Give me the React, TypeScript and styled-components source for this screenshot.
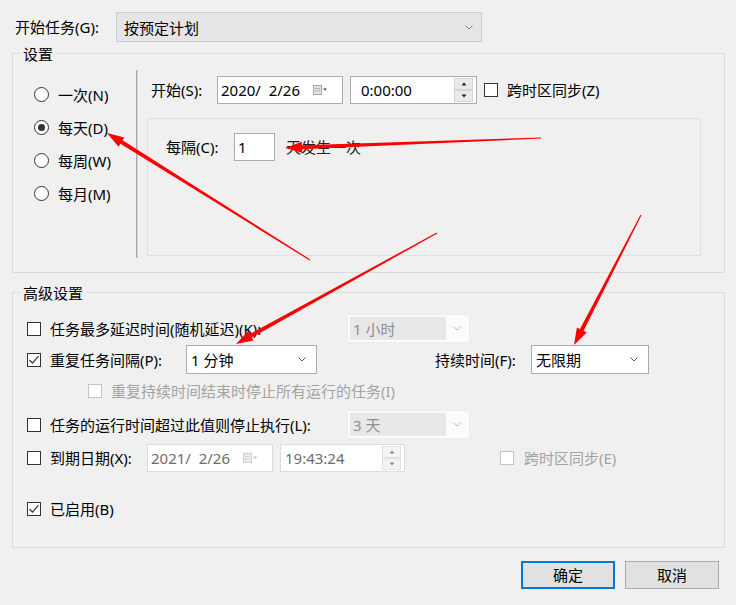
import React from "react";
import styled, { createGlobalStyle } from "styled-components";

const Global = createGlobalStyle`
  html, body { margin: 0; padding: 0; background: #f0f0f0; }
  body {
    font-family: "Noto Sans", "Noto Sans CJK SC", sans-serif;
    font-size: 15px;
    color: #000;
  }
  * { box-sizing: border-box; }
`;

const Page = styled.div`
  position: relative;
  width: 736px;
  height: 605px;
  padding: 12px 11px 0 12px;
  overflow: hidden;
`;

const TopRow = styled.div`
  display: flex;
  align-items: center;
  height: 30px;
  padding-left: 3px;
`;

const Text = styled.span<{ $w?: number; $ml?: number; $disabled?: boolean; $color?: string }>`
  flex-shrink: 0;
  white-space: pre;
  line-height: 20px;
  ${(p) => (p.$w ? `width: ${p.$w}px;` : "")}
  margin-left: ${(p) => p.$ml ?? 0}px;
  color: ${(p) => (p.$disabled ? "#a3a3a3" : p.$color ?? "#000")};
`;

const ReadonlyCombo = styled.div`
  width: 366px;
  height: 30px;
  background: #e5e5e5;
  border: 1px solid #cccccc;
  display: flex;
  align-items: center;
  justify-content: space-between;
  padding: 0 8px 0 7px;
`;

const Group = styled.fieldset<{ $mt: number }>`
  margin: ${(p) => p.$mt}px 0 0 0;
  padding: 0;
  border: 1px solid #dcdcdc;
  min-width: 0;
`;

const Legend = styled.legend`
  margin-left: 7px;
  padding: 2px 3px 0;
  line-height: 22px;
`;

const SettingsBody = styled.div`
  display: flex;
  align-items: flex-start;
  height: 207px;
`;

const RadioCol = styled.div`
  flex-shrink: 0;
  width: 123px;
  padding: 13px 0 0 21px;
  display: flex;
  flex-direction: column;
`;

const RadioRow = styled.label`
  display: flex;
  align-items: center;
  height: 33px;
`;

const RadioCircle = styled.span<{ $on?: boolean }>`
  width: 15px;
  height: 15px;
  border-radius: 50%;
  border: 1px solid #333;
  background: #fff;
  display: flex;
  align-items: center;
  justify-content: center;
  flex-shrink: 0;
  margin-right: 9px;
  &::after {
    content: "";
    width: 7px;
    height: 7px;
    border-radius: 50%;
    background: ${(p) => (p.$on ? "#333" : "transparent")};
  }
`;

const VSep = styled.div`
  flex-shrink: 0;
  margin-top: 5px;
  width: 2px;
  height: 188px;
  border-left: 1px solid #a8a8a8;
  border-right: 1px solid #d6d6d6;
`;

const RightCol = styled.div`
  margin-left: 9px;
  padding-top: 11px;
  display: flex;
  flex-direction: column;
`;

const StartRow = styled.div`
  display: flex;
  align-items: center;
  height: 28px;
  padding-left: 4px;
`;

const Field = styled.div<{ $w: number; $h?: number; $ml?: number; $pl?: number; $disabled?: boolean }>`
  flex-shrink: 0;
  width: ${(p) => p.$w}px;
  height: ${(p) => p.$h ?? 28}px;
  margin-left: ${(p) => p.$ml ?? 0}px;
  padding-left: ${(p) => p.$pl ?? 3}px;
  background: #fff;
  border: 1px solid ${(p) => (p.$disabled ? "#dcdcdc" : "#ababab")};
  color: ${(p) => (p.$disabled ? "#6d6d6d" : "#000")};
  display: flex;
  align-items: center;
  white-space: pre;
  line-height: 20px;
`;

const FieldText = styled.span`
  flex: 1;
`;

const Spinner = styled.div`
  display: flex;
  flex-direction: column;
  margin-right: 3px;
`;

const SpinBtn = styled.div<{ $disabled?: boolean }>`
  width: 19px;
  height: 12px;
  background: ${(p) => (p.$disabled ? "#f4f4f4" : "#eaeaea")};
  border: 1px solid ${(p) => (p.$disabled ? "#e2e2e2" : "#d4d4d4")};
  display: flex;
  align-items: center;
  justify-content: center;
`;

const CalIcon = styled.svg`
  margin-right: 14px;
  flex-shrink: 0;
`;

const InnerPanel = styled.div`
  margin-top: 14px;
  width: 554px;
  height: 138px;
  border: 1px solid #dfdfdf;
  padding: 14px 0 0 18px;
`;

const PanelRow = styled.div`
  display: flex;
  align-items: center;
  height: 28px;
`;

const AdvBody = styled.div`
  height: 243px;
  padding-left: 14px;
  display: flex;
  flex-direction: column;
`;

const Row = styled.div<{ $h: number; $mt: number }>`
  display: flex;
  align-items: center;
  height: ${(p) => p.$h}px;
  margin-top: ${(p) => p.$mt}px;
`;

const Box = styled.span<{ $disabled?: boolean; $ml?: number }>`
  flex-shrink: 0;
  width: 14px;
  height: 14px;
  margin-left: ${(p) => p.$ml ?? 0}px;
  border: 1px solid ${(p) => (p.$disabled ? "#c4c4c4" : "#333")};
  background: #fff;
  display: flex;
  align-items: center;
  justify-content: center;
`;

const Combo = styled.div<{ $w: number }>`
  flex-shrink: 0;
  width: ${(p) => p.$w}px;
  height: 29px;
  background: #fff;
  border: 1px solid #acacac;
  display: flex;
  align-items: center;
  justify-content: space-between;
  padding: 0 10px 0 4px;
  line-height: 20px;
`;

const DisabledCombo = styled.div<{ $w: number }>`
  flex-shrink: 0;
  width: ${(p) => p.$w}px;
  height: 29px;
  background: #fbfbfb;
  border: 1px solid #ececec;
  padding: 2px;
  display: flex;
  align-items: stretch;
`;

const DisabledFill = styled.div`
  width: 96px;
  background: #e8e8e8;
  color: #8f8f8f;
  display: flex;
  align-items: center;
  padding-left: 3px;
  line-height: 20px;
`;

const DisabledArrow = styled.div`
  flex: 1;
  display: flex;
  align-items: center;
  justify-content: center;
`;

const ButtonRow = styled.div`
  display: flex;
  justify-content: flex-end;
  gap: 10px;
  margin-top: 13px;
  padding-right: 6px;
`;

const Button = styled.button<{ $primary?: boolean }>`
  width: 94px;
  height: 28px;
  background: #e1e1e1;
  border: ${(p) => (p.$primary ? "2px solid #0078d7" : "1px solid #adadad")};
  font: inherit;
  font-size: 15px;
  color: #000;
  padding: 0;
  line-height: 20px;
`;

const Overlay = styled.svg`
  position: absolute;
  left: 0;
  top: 0;
  pointer-events: none;
`;

const Chevron = ({ color = "#606060" }: { color?: string }) => (
  <svg width="8" height="5" viewBox="0 0 8 5">
    <polyline points="0.5,0.5 4,4 7.5,0.5" fill="none" stroke={color} strokeWidth="1" />
  </svg>
);

const Tick = ({ color = "#333" }: { color?: string }) => (
  <svg width="12" height="12" viewBox="0 0 12 12">
    <polyline points="1.5,6 4.5,9.2 10.5,2.2" fill="none" stroke={color} strokeWidth="1.2" />
  </svg>
);

const Calendar = ({ dim }: { dim?: boolean }) => (
  <CalIcon width="15" height="10" viewBox="0 0 15 10">
    <rect x="0.5" y="0.5" width="8" height="9" fill={dim ? "#ececec" : "#e2e2e2"} stroke={dim ? "#cfcfcf" : "#a6a6a6"} />
    <line x1="2" y1="3.5" x2="7" y2="3.5" stroke={dim ? "#d8d8d8" : "#b0b0b0"} />
    <line x1="2" y1="6" x2="7" y2="6" stroke={dim ? "#d8d8d8" : "#b0b0b0"} />
    <polygon points="10,3.5 14,3.5 12,5.8" fill={dim ? "#b8b8c0" : "#4a4a66"} />
  </CalIcon>
);

const Spin = ({ disabled }: { disabled?: boolean }) => {
  const c = disabled ? "#8a8a8a" : "#222";
  return (
    <Spinner>
      <SpinBtn $disabled={disabled}>
        <svg width="6" height="4" viewBox="0 0 6 4"><polygon points="3,0.5 5.5,3.5 0.5,3.5" fill={c} /></svg>
      </SpinBtn>
      <SpinBtn $disabled={disabled}>
        <svg width="6" height="4" viewBox="0 0 6 4"><polygon points="0.5,0.5 5.5,0.5 3,3.5" fill={c} /></svg>
      </SpinBtn>
    </Spinner>
  );
};

const arrowPoints = (tx: number, ty: number, px: number, py: number, W = 5.5, H = 17, wb = 2) => {
  const dx = px - tx;
  const dy = py - ty;
  const len = Math.hypot(dx, dy);
  const ux = dx / len;
  const uy = dy / len;
  const nx = -uy;
  const ny = ux;
  const wt = 0.6;
  const bx = px - ux * H;
  const by = py - uy * H;
  const pts = [
    [tx + nx * wt, ty + ny * wt],
    [bx + nx * wb, by + ny * wb],
    [bx + nx * W, by + ny * W],
    [px, py],
    [bx - nx * W, by - ny * W],
    [bx - nx * wb, by - ny * wb],
    [tx - nx * wt, ty - ny * wt],
  ];
  return pts.map((p) => p.map((v) => v.toFixed(1)).join(",")).join(" ");
};

const arrows: [number, number, number, number][] = [
  [310, 260, 107, 133],
  [541, 138, 285, 148],
  [437, 233, 236, 344],
  [641, 215, 574, 345],
];

export default function App() {
  return (
    <>
      <Global />
      <Page>
        <TopRow>
          <Text $w={101}>开始任务(G):</Text>
          <ReadonlyCombo>
            <span>按预定计划</span>
            <Chevron color="#808080" />
          </ReadonlyCombo>
        </TopRow>

        <Group $mt={-1}>
          <Legend>设置</Legend>
          <SettingsBody>
            <RadioCol>
              <RadioRow><RadioCircle /><Text>一次(N)</Text></RadioRow>
              <RadioRow><RadioCircle $on /><Text>每天(D)</Text></RadioRow>
              <RadioRow><RadioCircle /><Text>每周(W)</Text></RadioRow>
              <RadioRow><RadioCircle /><Text>每月(M)</Text></RadioRow>
            </RadioCol>
            <VSep />
            <RightCol>
              <StartRow>
                <Text $w={66}>开始(S):</Text>
                <Field $w={126}>
                  <FieldText>2020/  2/26</FieldText>
                  <Calendar />
                </Field>
                <Field $w={127} $ml={7} $pl={10}>
                  <FieldText>0:00:00</FieldText>
                  <Spin />
                </Field>
                <Box $ml={7} />
                <Text $ml={9}>跨时区同步(Z)</Text>
              </StartRow>
              <InnerPanel>
                <PanelRow>
                  <Text $w={68}>每隔(C):</Text>
                  <Field $w={41}>
                    <FieldText>1</FieldText>
                  </Field>
                  <Text $ml={11} $color="#222">天发生一次</Text>
                </PanelRow>
              </InnerPanel>
            </RightCol>
          </SettingsBody>
        </Group>

        <Group $mt={7}>
          <Legend>高级设置</Legend>
          <AdvBody>
            <Row $h={29} $mt={10}>
              <Box />
              <Text $ml={9} $w={297}>任务最多延迟时间(随机延迟)(K):</Text>
              <DisabledCombo $w={123}>
                <DisabledFill>1 小时</DisabledFill>
                <DisabledArrow><Chevron color="#c0c0c0" /></DisabledArrow>
              </DisabledCombo>
            </Row>
            <Row $h={29} $mt={2}>
              <Box><Tick /></Box>
              <Text $ml={9} $w={136}>重复任务间隔(P):</Text>
              <Combo $w={131}>
                <span>1 分钟</span>
                <Chevron />
              </Combo>
              <Text $ml={118} $w={96}>持续时间(F):</Text>
              <Combo $w={118}>
                <span>无限期</span>
                <Chevron />
              </Combo>
            </Row>
            <Row $h={30} $mt={2}>
              <Box $ml={61} $disabled />
              <Text $ml={9} $disabled>重复持续时间结束时停止所有运行的任务(I)</Text>
            </Row>
            <Row $h={29} $mt={4}>
              <Box />
              <Text $ml={9} $w={297}>任务的运行时间超过此值则停止执行(L):</Text>
              <DisabledCombo $w={123}>
                <DisabledFill>3 天</DisabledFill>
                <DisabledArrow><Chevron color="#c0c0c0" /></DisabledArrow>
              </DisabledCombo>
            </Row>
            <Row $h={28} $mt={5}>
              <Box />
              <Text $ml={9} $w={97}>到期日期(X):</Text>
              <Field $w={126} $disabled>
                <FieldText>2021/  2/26</FieldText>
                <Calendar dim />
              </Field>
              <Field $w={125} $ml={7} $pl={4} $disabled>
                <FieldText>19:43:24</FieldText>
                <Spin disabled />
              </Field>
              <Box $ml={95} $disabled />
              <Text $ml={10} $disabled>跨时区同步(E)</Text>
            </Row>
            <Row $h={28} $mt={23}>
              <Box><Tick /></Box>
              <Text $ml={9}>已启用(B)</Text>
            </Row>
          </AdvBody>
        </Group>

        <ButtonRow>
          <Button $primary>确定</Button>
          <Button>取消</Button>
        </ButtonRow>

        <Overlay width="736" height="605" viewBox="0 0 736 605">
          {arrows.map(([a, b, c, d], i) => (
            <polygon key={i} points={arrowPoints(a, b, c, d)} fill="#ff0000" />
          ))}
        </Overlay>
      </Page>
    </>
  );
}
